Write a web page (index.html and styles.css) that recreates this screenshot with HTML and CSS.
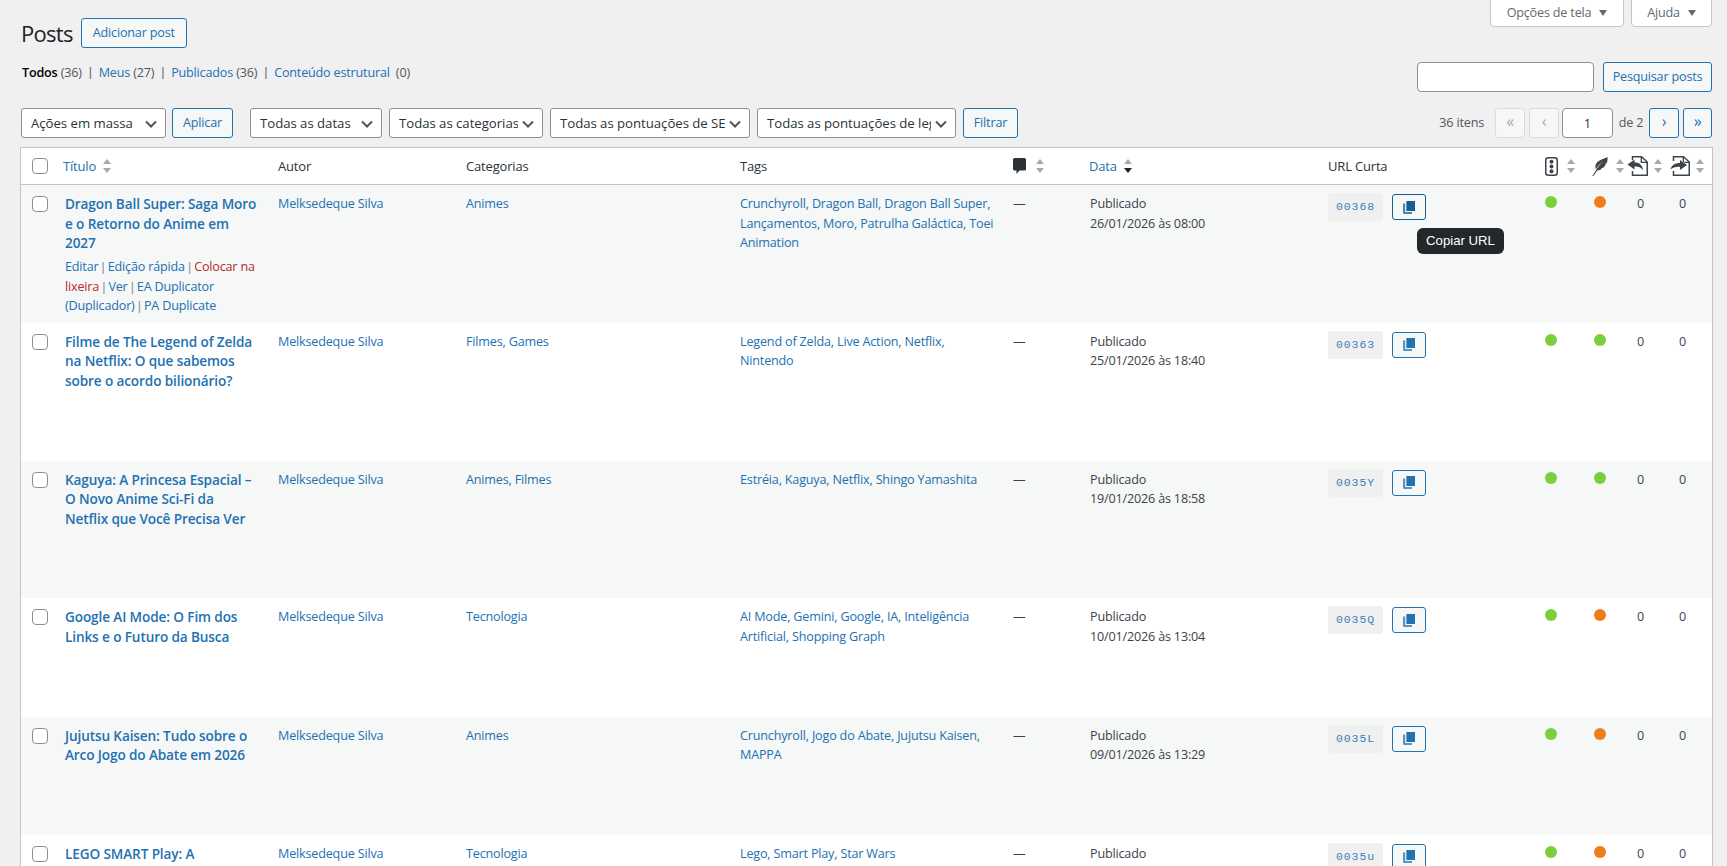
FILE: index.html
```html
<!DOCTYPE html>
<html lang="pt-BR">
<head>
<meta charset="utf-8">
<title>Posts</title>
<link rel="stylesheet" href="styles.css">
</head>
<body>
<svg class="defs" width="0" height="0" aria-hidden="true">
  <symbol id="copy" viewBox="0 0 12 13"><path d="M3.400 0H12V10H3.400Z"/><path opacity=".75" d="M0 2.600H2.200V11H9V13H1.200Q0 13 0 11.800Z"/></symbol>
</svg>
<div class="wrap">
  <div class="top">
    <div class="title-row">
      <h1>Posts</h1>
      <a class="btn add" href="#">Adicionar post</a>
    </div>
    <div class="screen-links">
      <button class="tab tab-screen">Opções de tela<i class="caret"></i></button>
      <button class="tab tab-help">Ajuda<i class="caret"></i></button>
    </div>
  </div>

  <div class="views-row">
    <ul class="views">
      <li><a class="current" href="#">Todos</a> <span>(36)</span></li>
      <li class="sep">|</li>
      <li><a href="#">Meus</a> <span>(27)</span></li>
      <li class="sep">|</li>
      <li><a href="#">Publicados</a> <span>(36)</span></li>
      <li class="sep">|</li>
      <li><a href="#">Conteúdo estrutural</a> <span class="gap">(0)</span></li>
    </ul>
    <div class="search">
      <input class="search-input" type="search" aria-label="Pesquisar">
      <a class="btn search-btn" href="#">Pesquisar posts</a>
    </div>
  </div>

  <div class="tablenav">
    <div class="filters">
      <select class="sel s-bulk"><option>Ações em massa</option></select>
      <a class="btn apply" href="#">Aplicar</a>
      <select class="sel s-date"><option>Todas as datas</option></select>
      <select class="sel s-cat"><option>Todas as categorias</option></select>
      <select class="sel s-seo"><option>Todas as pontuações de SEO</option></select>
      <select class="sel s-read"><option>Todas as pontuações de legibilidade</option></select>
      <a class="btn filter" href="#">Filtrar</a>
    </div>
    <div class="pager">
      <span class="count">36 itens</span>
      <span class="pg off">«</span>
      <span class="pg off prev">‹</span>
      <input class="page-input" type="text" value="1" aria-label="Página atual">
      <span class="of">de 2</span>
      <a class="pg" href="#">›</a>
      <a class="pg last" href="#">»</a>
    </div>
  </div>

  <div class="table-box">
    <table class="posts">
      <colgroup>
        <col class="c-cb"><col class="c-title"><col class="c-author"><col class="c-cat"><col class="c-tags"><col class="c-com"><col class="c-date"><col class="c-url"><col class="c-seo"><col class="c-read"><col class="c-in"><col class="c-out">
      </colgroup>
      <thead>
        <tr>
          <th class="cb"><input class="check" type="checkbox" aria-label="Selecionar todos"></th>
          <th class="th-title"><a class="th-in" href="#"><span class="th-text">Título</span><i class="sort"></i></a></th>
          <th><span class="th-text">Autor</span></th>
          <th><span class="th-text">Categorias</span></th>
          <th><span class="th-text">Tags</span></th>
          <th class="th-com"><span class="th-in"><svg width="13" height="16" viewBox="0 0 13 16"><path fill="#2c3338" d="M1.500 0H11.500Q13 0 13 1.500V11Q13 12.500 11.500 12.500H6.500L3.500 16V12.500H1.500Q0 12.500 0 11V1.500Q0 0 1.500 0Z"/></svg><i class="sort com-sort"></i></span></th>
          <th class="th-date"><a class="th-in" href="#"><span class="th-text">Data</span><i class="sort desc"></i></a></th>
          <th><span class="th-text">URL Curta</span></th>
          <th class="th-seo"><span class="th-in"><svg width="13" height="19" viewBox="0 0 13 19"><rect x=".75" y=".75" width="11.500" height="17.500" rx="2.500" fill="none" stroke="#3c434a" stroke-width="1.500"/><circle cx="6.500" cy="4.800" r="2" fill="#3c434a"/><circle cx="6.500" cy="9.500" r="2" fill="#3c434a"/><circle cx="6.500" cy="14.200" r="2" fill="#3c434a"/></svg><i class="sort seo-sort"></i></span></th>
          <th class="th-read"><span class="th-in"><svg width="16" height="19" viewBox="0 0 16 19"><path fill="#3c434a" d="M15.500 0C15.800 3 15.300 5 14.400 6.500L12.500 6.900L13.900 7.500C13.100 9 12 10.200 10.700 11L8.800 11.100L10 11.700C8.600 12.700 6.900 13.300 5.300 13.500L1.300 19H0.300L4.800 12C6.800 9 9.500 6 11.500 3.800C9 5.800 6 9 3.900 12.300C2.900 9.500 3.500 7 5.500 5C8 2.700 12 1.800 15.500 0Z"/></svg><i class="sort read-sort"></i></span></th>
          <th class="th-in-col"><span class="th-in"><svg width="21" height="20" viewBox="0 0 21 20"><path fill="none" stroke="#3c434a" stroke-width="1.500" d="M5.500 4V.75H14.500L20.250 6V19.250H5.500V15"/><path fill="none" stroke="#3c434a" stroke-width="1.300" d="M14.300 1V6.300H20"/><path fill="#3c434a" stroke="#fff" stroke-width="1" paint-order="stroke" d="M7.500 3.500L.5 8.500L7.500 13.500V10.500C10.500 10 13.500 11 16 14C15.500 9 12 6.300 7.500 6.500Z"/></svg><i class="sort in-sort"></i></span></th>
          <th class="th-out-col"><span class="th-in"><svg width="20" height="20" viewBox="0 0 20 20"><path fill="none" stroke="#3c434a" stroke-width="1.500" d="M3.500 5V.75H13.500L19.250 6V19.250H3.500V15"/><path fill="none" stroke="#3c434a" stroke-width="1.300" d="M13.300 1V6.300H19"/><path fill="#3c434a" stroke="#fff" stroke-width="1" paint-order="stroke" d="M10 4L17 9L10 14V11C7 10.300 3.500 11 .5 13.500C1.500 9 5.500 7 10 7Z"/></svg><i class="sort out-sort"></i></span></th>
        </tr>
      </thead>
      <tbody>
        <tr class="odd">
          <td class="cb"><input class="check" type="checkbox" aria-label="Selecionar"></td>
          <td class="title"><a class="row-title" href="#">Dragon Ball Super: Saga Moro e o Retorno do Anime em 2027</a>
            <div class="actions"><a href="#">Editar</a> <span class="pipe">|</span> <a href="#">Edição rápida</a> <span class="pipe">|</span> <a class="trash" href="#">Colocar na lixeira</a> <span class="pipe">|</span> <a href="#">Ver</a> <span class="pipe">|</span> <a href="#">EA Duplicator (Duplicador)</a> <span class="pipe">|</span> <a href="#">PA Duplicate</a></div></td>
          <td><a href="#">Melksedeque Silva</a></td>
          <td class="links"><a href="#">Animes</a></td>
          <td class="links tags"><a href="#">Crunchyroll</a>, <a href="#">Dragon Ball</a>, <a href="#">Dragon Ball Super</a>, <a href="#">Lançamentos</a>, <a href="#">Moro</a>, <a href="#">Patrulha Galáctica</a>, <a href="#">Toei Animation</a></td>
          <td>—</td>
          <td class="date">Publicado<br>26/01/2026 às 08:00</td>
          <td class="url"><div class="url-cell"><code>00368</code><button class="copy focus" aria-label="Copiar URL"><svg width="12" height="13"><use href="#copy"/></svg></button><span class="tip">Copiar URL</span></div></td>
          <td><i class="dot green"></i></td><td><i class="dot orange"></i></td><td class="zero">0</td><td>0</td>
        </tr>
        <tr>
          <td class="cb"><input class="check" type="checkbox" aria-label="Selecionar"></td>
          <td class="title"><a class="row-title" href="#">Filme de The Legend of Zelda na Netflix: O que sabemos sobre o acordo bilionário?</a>
            <div class="actions hidden"><a href="#">Editar</a> <span class="pipe">|</span> <a href="#">Edição rápida</a> <span class="pipe">|</span> <a href="#">Colocar na lixeira</a> <span class="pipe">|</span> <a href="#">Ver</a> <span class="pipe">|</span> <a href="#">EA Duplicator (Duplicador)</a> <span class="pipe">|</span> <a href="#">PA Duplicate</a></div></td>
          <td><a href="#">Melksedeque Silva</a></td>
          <td class="links"><a href="#">Filmes</a>, <a href="#">Games</a></td>
          <td class="links tags"><a href="#">Legend of Zelda</a>, <a href="#">Live Action</a>, <a href="#">Netflix</a>, <a href="#">Nintendo</a></td>
          <td>—</td>
          <td class="date">Publicado<br>25/01/2026 às 18:40</td>
          <td class="url"><div class="url-cell"><code>00363</code><button class="copy" aria-label="Copiar URL"><svg width="12" height="13"><use href="#copy"/></svg></button></div></td>
          <td><i class="dot green"></i></td><td><i class="dot green"></i></td><td class="zero">0</td><td>0</td>
        </tr>
        <tr class="odd">
          <td class="cb"><input class="check" type="checkbox" aria-label="Selecionar"></td>
          <td class="title"><a class="row-title" href="#">Kaguya: A Princesa Espacial – O Novo Anime Sci-Fi da Netflix que Você Precisa Ver</a>
            <div class="actions hidden"><a href="#">Editar</a> <span class="pipe">|</span> <a href="#">Edição rápida</a> <span class="pipe">|</span> <a href="#">Colocar na lixeira</a> <span class="pipe">|</span> <a href="#">Ver</a> <span class="pipe">|</span> <a href="#">EA Duplicator (Duplicador)</a> <span class="pipe">|</span> <a href="#">PA Duplicate</a></div></td>
          <td><a href="#">Melksedeque Silva</a></td>
          <td class="links"><a href="#">Animes</a>, <a href="#">Filmes</a></td>
          <td class="links tags"><a href="#">Estréia</a>, <a href="#">Kaguya</a>, <a href="#">Netflix</a>, <a href="#">Shingo Yamashita</a></td>
          <td>—</td>
          <td class="date">Publicado<br>19/01/2026 às 18:58</td>
          <td class="url"><div class="url-cell"><code>0035Y</code><button class="copy" aria-label="Copiar URL"><svg width="12" height="13"><use href="#copy"/></svg></button></div></td>
          <td><i class="dot green"></i></td><td><i class="dot green"></i></td><td class="zero">0</td><td>0</td>
        </tr>
        <tr>
          <td class="cb"><input class="check" type="checkbox" aria-label="Selecionar"></td>
          <td class="title"><a class="row-title" href="#">Google AI Mode: O Fim dos Links e o Futuro da Busca</a>
            <div class="actions hidden"><a href="#">Editar</a> <span class="pipe">|</span> <a href="#">Edição rápida</a> <span class="pipe">|</span> <a href="#">Colocar na lixeira</a> <span class="pipe">|</span> <a href="#">Ver</a> <span class="pipe">|</span> <a href="#">EA Duplicator (Duplicador)</a> <span class="pipe">|</span> <a href="#">PA Duplicate</a></div></td>
          <td><a href="#">Melksedeque Silva</a></td>
          <td class="links"><a href="#">Tecnologia</a></td>
          <td class="links tags"><a href="#">AI Mode</a>, <a href="#">Gemini</a>, <a href="#">Google</a>, <a href="#">IA</a>, <a href="#">Inteligência Artificial</a>, <a href="#">Shopping Graph</a></td>
          <td>—</td>
          <td class="date">Publicado<br>10/01/2026 às 13:04</td>
          <td class="url"><div class="url-cell"><code>0035Q</code><button class="copy" aria-label="Copiar URL"><svg width="12" height="13"><use href="#copy"/></svg></button></div></td>
          <td><i class="dot green"></i></td><td><i class="dot orange"></i></td><td class="zero">0</td><td>0</td>
        </tr>
        <tr class="odd">
          <td class="cb"><input class="check" type="checkbox" aria-label="Selecionar"></td>
          <td class="title"><a class="row-title" href="#">Jujutsu Kaisen: Tudo sobre o Arco Jogo do Abate em 2026</a>
            <div class="actions hidden"><a href="#">Editar</a> <span class="pipe">|</span> <a href="#">Edição rápida</a> <span class="pipe">|</span> <a href="#">Colocar na lixeira</a> <span class="pipe">|</span> <a href="#">Ver</a> <span class="pipe">|</span> <a href="#">EA Duplicator (Duplicador)</a> <span class="pipe">|</span> <a href="#">PA Duplicate</a></div></td>
          <td><a href="#">Melksedeque Silva</a></td>
          <td class="links"><a href="#">Animes</a></td>
          <td class="links tags"><a href="#">Crunchyroll</a>, <a href="#">Jogo do Abate</a>, <a href="#">Jujutsu Kaisen</a>, <a href="#">MAPPA</a></td>
          <td>—</td>
          <td class="date">Publicado<br>09/01/2026 às 13:29</td>
          <td class="url"><div class="url-cell"><code>0035L</code><button class="copy" aria-label="Copiar URL"><svg width="12" height="13"><use href="#copy"/></svg></button></div></td>
          <td><i class="dot green"></i></td><td><i class="dot orange"></i></td><td class="zero">0</td><td>0</td>
        </tr>
        <tr>
          <td class="cb"><input class="check" type="checkbox" aria-label="Selecionar"></td>
          <td class="title"><a class="row-title" href="#">LEGO SMART Play: A</a>
            <div class="actions hidden"><a href="#">Editar</a> <span class="pipe">|</span> <a href="#">Edição rápida</a></div></td>
          <td><a href="#">Melksedeque Silva</a></td>
          <td class="links"><a href="#">Tecnologia</a></td>
          <td class="links tags"><a href="#">Lego</a>, <a href="#">Smart Play</a>, <a href="#">Star Wars</a></td>
          <td>—</td>
          <td class="date">Publicado</td>
          <td class="url"><div class="url-cell"><code>0035u</code><button class="copy" aria-label="Copiar URL"><svg width="12" height="13"><use href="#copy"/></svg></button></div></td>
          <td><i class="dot green"></i></td><td><i class="dot orange"></i></td><td class="zero">0</td><td>0</td>
        </tr>
      </tbody>
    </table>
  </div>
</div>
</body>
</html>
```
FILE: styles.css
```css
* { box-sizing: border-box; }
html, body { margin: 0; height: 100%; overflow: hidden; }
body {
  background: #f0f0f1;
  color: #3c434a;
  font: 12.6px/19.5px "Open Sans", "Liberation Sans", sans-serif;
  letter-spacing: -.18px;
}
a { color: #2271b1; text-decoration: none; }
.defs { display: block; height: 0; }
.wrap { padding: 0 14px 0 20px; }

.top { display: flex; justify-content: space-between; align-items: flex-start; }
.title-row { display: flex; align-items: center; margin-top: 18px; height: 30px; }
h1 { margin: 0 8px 0 1px; font-size: 22px; font-weight: 400; color: #1d2327; line-height: 30px; letter-spacing: -.7px; }
.btn {
  display: inline-flex; align-items: center; justify-content: center;
  height: 30px; border: 1px solid #2271b1; border-radius: 3px;
  background: #f6f7f7; color: #2271b1; white-space: nowrap;
}
.add { width: 106px; }
.screen-links { display: flex; gap: 7px; margin-right: 1px; }
.tab {
  display: flex; align-items: center; justify-content: center; gap: 7px;
  height: 28px; margin-top: -1px; padding: 0;
  background: #fff; border: 1px solid #c3c4c7; border-radius: 0 0 4px 4px;
  color: #646970; font: inherit; letter-spacing: inherit;
}
.tab-screen { width: 134px; }
.tab-help { width: 81px; }
.caret { width: 0; height: 0; border: 4.500px solid transparent; border-top: 6px solid #646970; border-bottom: 0; margin-left: 1px; }

.views-row { display: flex; justify-content: space-between; align-items: flex-start; margin-top: 14px; }
.views { display: flex; gap: 6.900px; margin: 1px 0 0 2px; padding: 0; list-style: none; color: #50575e; }
.views .current { color: #000; font-weight: 600; }
.views .sep { color: #646970; font-family: "Liberation Sans", sans-serif; }
.views .gap { margin-left: 3px; }
.search { display: flex; gap: 9px; margin-right: 1px; }
.search-input { width: 177px; height: 30px; background: #fff; border: 1px solid #8c8f94; border-radius: 4px; padding: 0 8px; }
.search-btn { width: 109px; }

.tablenav { display: flex; justify-content: space-between; margin-top: 16px; height: 30px; margin-bottom: 9px; }
.filters { display: flex; padding-left: 1px; }
.sel {
  appearance: none; height: 30px; padding: 0 24px 0 9px;
  border: 1px solid #8c8f94; border-radius: 3px; color: #2c3338;
  background: #fff url("data:image/svg+xml,%3Csvg xmlns='http://www.w3.org/2000/svg' width='20' height='20' viewBox='0 0 20 20'%3E%3Cpath fill='none' stroke='%23555' stroke-width='2' d='M5 7.500l5 5 5-5'/%3E%3C/svg%3E") no-repeat right 4px top 5px;
  font: 13.2px "Open Sans", "Liberation Sans", sans-serif; letter-spacing: -.03px;
}
.s-bulk { width: 145px; margin-right: 6px; }
.apply { width: 61px; margin-right: 17px; }
.s-date { width: 132px; margin-right: 7px; }
.s-cat { width: 154px; margin-right: 7px; }
.s-seo { width: 200px; margin-right: 7px; }
.s-read { width: 199px; margin-right: 7px; }
.filter { width: 55px; }

.pager { display: flex; align-items: center; color: #50575e; margin-right: 1px; }
.count { margin-right: 11px; }
.pg {
  display: flex; align-items: center; justify-content: center;
  width: 30px; height: 30px; border: 1px solid #2271b1; border-radius: 3px;
  background: #f6f7f7; color: #2271b1; font-size: 16px; padding-bottom: 3px;
}
.pg.off { border-color: #dcdcde; color: #a7aaad; }
.prev { margin-left: 4px; margin-right: 3px; }
.last { margin-left: 4px; width: 29px; }
.page-input { width: 51px; height: 30px; border: 1px solid #8c8f94; border-radius: 4px; background: #fff; text-align: center; font: 13px "Open Sans", sans-serif; color: #2c3338; padding: 0; }
.of { width: 36px; text-align: center; }

.table-box { background: #fff; }
.posts { width: 100%; table-layout: fixed; border-collapse: separate; border-spacing: 0; border: 1px solid #c3c4c7; }
.c-cb { width: 34px; } .c-title { width: 213px; } .c-author { width: 188px; } .c-cat { width: 274px; }
.c-tags { width: 273px; } .c-com { width: 76px; } .c-date { width: 239px; } .c-url { width: 217px; }
.c-seo { width: 49px; } .c-read { width: 40px; } .c-in { width: 45px; } .c-out { width: 43px; }

th { height: 37px; padding: 0 10px; text-align: left; font-weight: 400; color: #2c3338; border-bottom: 1px solid #c3c4c7; font-size: 13px; white-space: nowrap; }
.th-text { display: block; padding-top: 2px; }
a .th-text { color: #2271b1; }
td { padding: 9px 10px 7px; vertical-align: top; }
.odd td { background: #f6f7f7; }
td.links { color: #2271b1; }
td.tags { padding-right: 5px; }
td.date { padding-left: 11px; }
td.zero { padding-left: 13px; }
th.cb, td.cb { padding: 0 0 0 11px; }
td.cb { padding-top: 11px; }
.check { display: block; appearance: none; margin: 0; width: 16px; height: 16px; background: #fff; border: 1px solid #8c8f94; border-radius: 4px; }
.th-in { display: flex; align-items: center; }
.sort { display: flex; flex-direction: column; gap: 4px; width: 8px; margin-left: 7px; flex: none; }
.sort::before, .sort::after { content: ""; width: 0; height: 0; border-left: 4px solid transparent; border-right: 4px solid transparent; }
.sort::before { border-bottom: 5px solid #a7aaad; }
.sort::after { border-top: 5px solid #a7aaad; }
.sort.desc::after { border-top-color: #1d2327; }
.th-title { padding-left: 8px; }
.th-date { padding-left: 10px; }
.th-com { padding-left: 10px; }
.com-sort { margin-left: 10px; }
.th-seo { padding: 0 0 0 10px; }
.seo-sort { margin-left: 9px; }
.th-read { padding: 0 0 0 8px; }
.read-sort { margin-left: 8px; }
.th-in-col { padding: 0 0 0 3px; }
.in-sort { margin-left: 6px; }
.th-out-col { padding: 0 0 0 1px; }
.out-sort { margin-left: 6px; }

.row-title { display: block; font-size: 13.6px; font-weight: 600; letter-spacing: -.12px; margin-bottom: 2.800px; }
.actions { padding-top: 2px; color: #8c8f94; }
.actions.hidden { visibility: hidden; }
.pipe { font-family: "Liberation Sans", sans-serif; line-height: 0; }
.trash { color: #b32d2e; }
td.url { padding-top: 8px; }
.url-cell { position: relative; display: flex; align-items: flex-start; gap: 9px; }
code { display: block; width: 55px; height: 28px; background: #f0f0f1; border-radius: 3px; color: #3a80bb; text-align: center; font: 11.5px/28px "Liberation Mono", monospace; letter-spacing: .9px; }
.copy { display: flex; align-items: center; justify-content: center; width: 34px; height: 26px; margin-top: 1px; padding: 0; border: 1px solid #2271b1; border-radius: 3px; background: #f6f7f7; fill: #2271b1; }
.copy.focus { border-color: #135e96; fill: #135e96; }
.tip { position: absolute; left: 89px; top: 35px; width: 87px; height: 26px; border-radius: 6px; background: #23282b; color: #fff; text-align: center; line-height: 26px; font-family: "Liberation Sans", sans-serif; font-size: 13.2px; letter-spacing: 0; z-index: 2; }
.dot { display: block; width: 12px; height: 12px; border-radius: 50%; margin-top: 2px; }
.green { background: #7ad03a; }
.orange { background: #ee7c1b; }
```
